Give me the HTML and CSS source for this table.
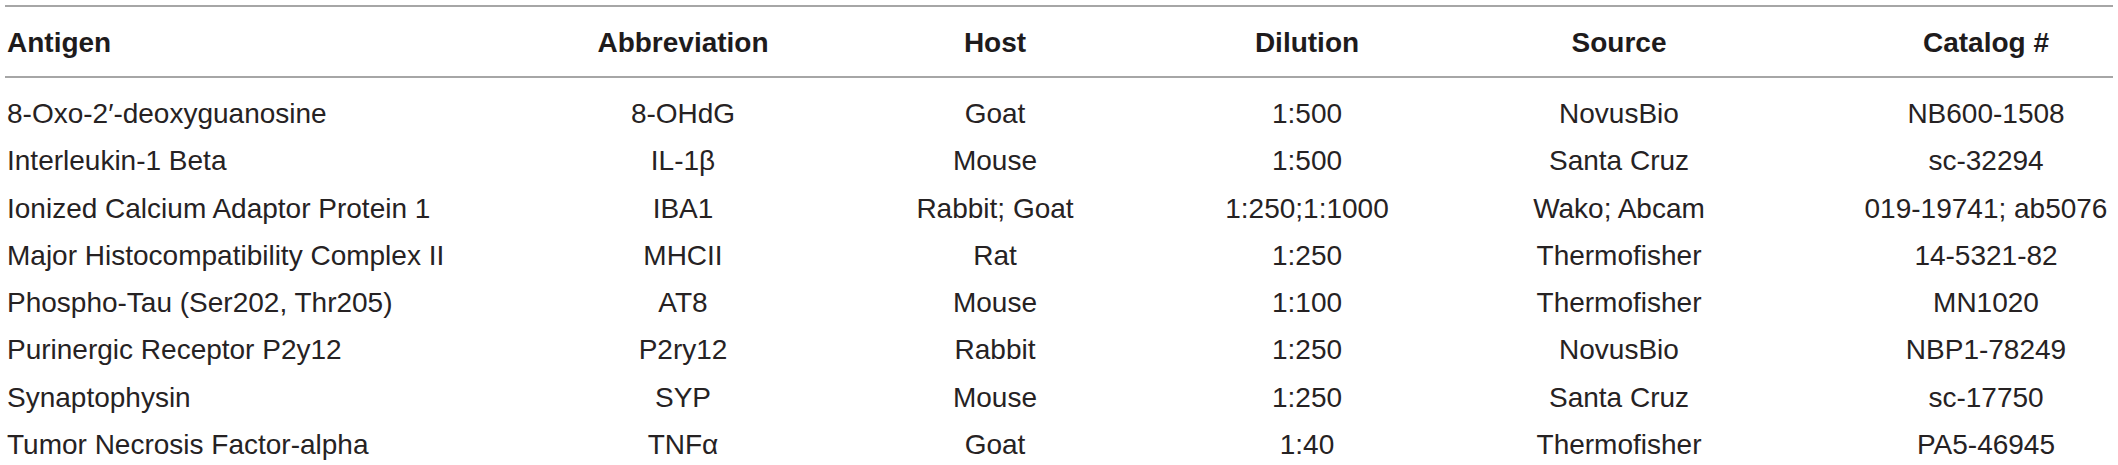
FILE: index.html
```html
<!DOCTYPE html>
<html>
<head>
<meta charset="utf-8">
<link rel="stylesheet" href="styles.css">
</head>
<body>
<table class="ab-table">
  <colgroup>
    <col class="c-antigen">
    <col class="c-mid">
    <col class="c-mid">
    <col class="c-mid">
    <col class="c-mid">
    <col class="c-cat">
  </colgroup>
  <thead>
    <tr>
      <th class="left">Antigen</th>
      <th>Abbreviation</th>
      <th>Host</th>
      <th>Dilution</th>
      <th>Source</th>
      <th class="cat">Catalog #</th>
    </tr>
  </thead>
  <tbody>
    <tr class="first"><td class="left">8-Oxo-2′-deoxyguanosine</td><td>8-OHdG</td><td>Goat</td><td>1:500</td><td>NovusBio</td><td class="cat">NB600-1508</td></tr>
    <tr><td class="left">Interleukin-1 Beta</td><td>IL-1β</td><td>Mouse</td><td>1:500</td><td>Santa Cruz</td><td class="cat">sc-32294</td></tr>
    <tr><td class="left">Ionized Calcium Adaptor Protein 1</td><td>IBA1</td><td>Rabbit; Goat</td><td>1:250;1:1000</td><td>Wako; Abcam</td><td class="cat">019-19741; ab5076</td></tr>
    <tr><td class="left">Major Histocompatibility Complex II</td><td>MHCII</td><td>Rat</td><td>1:250</td><td>Thermofisher</td><td class="cat">14-5321-82</td></tr>
    <tr><td class="left">Phospho-Tau (Ser202, Thr205)</td><td>AT8</td><td>Mouse</td><td>1:100</td><td>Thermofisher</td><td class="cat">MN1020</td></tr>
    <tr><td class="left">Purinergic Receptor P2y12</td><td>P2ry12</td><td>Rabbit</td><td>1:250</td><td>NovusBio</td><td class="cat">NBP1-78249</td></tr>
    <tr><td class="left">Synaptophysin</td><td>SYP</td><td>Mouse</td><td>1:250</td><td>Santa Cruz</td><td class="cat">sc-17750</td></tr>
    <tr><td class="left">Tumor Necrosis Factor-alpha</td><td>TNFα</td><td>Goat</td><td>1:40</td><td>Thermofisher</td><td class="cat">PA5-46945</td></tr>
  </tbody>
</table>
</body>
</html>
```
FILE: styles.css
```css
html, body {
  margin: 0;
  padding: 0;
  background: #ffffff;
  overflow: hidden;
}
body {
  padding: 5px 5px 0 5px;
  font-family: "Liberation Sans", Arial, sans-serif;
  color: #262223;
}
.ab-table {
  width: 2108px;
  border-collapse: collapse;
  table-layout: fixed;
  font-size: 28px;
}
.c-antigen { width: 522px; }
.c-mid { width: 312px; }
.c-cat { width: 338px; }
.ab-table thead tr {
  border-top: 2px solid #a6a6a6;
  border-bottom: 2px solid #a6a6a6;
}
.ab-table th {
  font-weight: bold;
  color: #1e1b1c;
  text-align: center;
  height: 67px;
  padding: 2px 0 0 0;
  line-height: 67px;
  white-space: nowrap;
}
.ab-table td {
  text-align: center;
  padding: 0;
  height: 47.3px;
  line-height: 47.3px;
  white-space: nowrap;
}
.ab-table tr.first td {
  padding-top: 12px;
}
.ab-table .left {
  text-align: left;
  padding-left: 2px;
}
.ab-table .cat {
  padding-left: 84px;
}
```
